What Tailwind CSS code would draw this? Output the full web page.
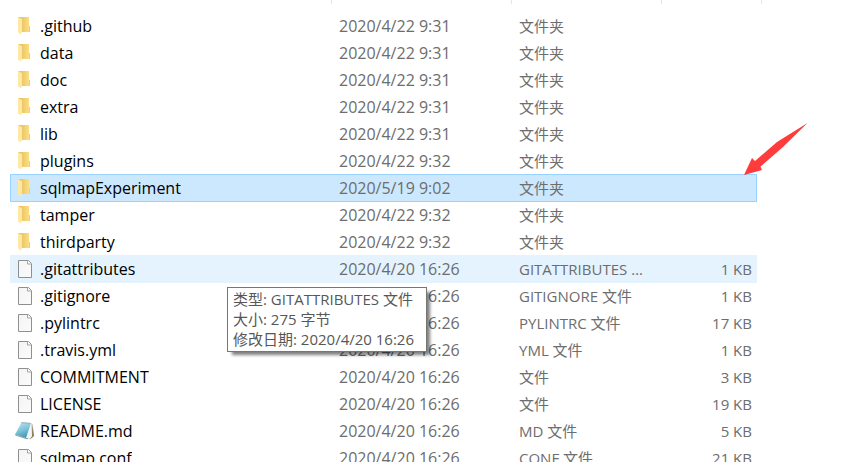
<!DOCTYPE html>
<html lang="zh-CN">
<head>
<meta charset="UTF-8">
<meta name="viewport" content="width=device-width, initial-scale=1.0">
<title>sqlmap</title>
<script src="https://cdn.jsdelivr.net/npm/@tailwindcss/browser@4"></script>
</head>
<body class="relative h-screen overflow-hidden bg-white font-['Open_Sans','Noto_Sans_CJK_SC',sans-serif] text-[15px] leading-5 text-[#6d6d6d]">

  <!-- icon sprites -->
  <svg class="absolute size-0" aria-hidden="true">
    <defs>
      <linearGradient id="folder-back" x1="0" x2="1">
        <stop offset="0.3" stop-color="#ebc565"/>
        <stop offset="0.9" stop-color="#fcdd82"/>
      </linearGradient>
      <linearGradient id="paper" x1="0" y1="0" x2="1" y2="1">
        <stop offset="0" stop-color="#f3f4f4"/>
        <stop offset="1" stop-color="#fbfbfb"/>
      </linearGradient>
      <linearGradient id="cover" x1="0.2" y1="0" x2="0.6" y2="1">
        <stop offset="0" stop-color="#b9e3ee"/>
        <stop offset="0.5" stop-color="#7fc4d9"/>
        <stop offset="1" stop-color="#3c93b2"/>
      </linearGradient>
    </defs>
    <symbol id="folder" viewBox="0 0 20 20">
      <path d="M3 1h11v9h1v6H4z" fill="url(#folder-back)"/>
      <path d="M14 10h1v6h-1z" fill="#f3cd6c"/>
      <path d="M3 1l3.600 2q.4.2.4.8v12l-1 2.600-3-1.900z" fill="#ffe8a3"/>
    </symbol>
    <symbol id="file" viewBox="0 0 20 20">
      <path d="M3.500 1.500h10l3 3v14h-13z" fill="url(#paper)" stroke="#8f8f8f"/>
      <path d="M12.500 1.500v3.500h4" fill="#fff" stroke="#a3a3a3"/>
    </symbol>
    <symbol id="notepad" viewBox="0 0 20 20">
      <path d="M16 2l1.800 1 1.400 12-4 3.500-3-1z" fill="#ded9c9"/>
      <path d="M17.300 3.200L19 15l-4 3.500 2-3.500z" fill="#8a7b60"/>
      <path d="M15.500 2l1.500 13-3 3-9-1.800z" fill="#f1f5f5"/>
      <path d="M6.500 1.500l9.500 .5-5 15L0 13.500z" fill="url(#cover)"/>
      <path d="M6.500 1l9.500 1-.4 1-9.500-.8z" fill="#9fb4ba"/>
      <path d="M0 13.500L11 17l3 .5-2 .8L.5 14.500z" fill="#81959b"/>
    </symbol>
  </svg>

  <main class="pl-[10px] pr-[90px]">
    <table class="w-full table-fixed border-separate border-spacing-0">
      <colgroup>
        <col>
        <col class="w-[180px]">
        <col class="w-[150px]">
        <col class="w-[96px]">
      </colgroup>
      <thead>
        <tr class="h-3 align-top">
          <th class="p-0" aria-label="名称"></th>
          <th class="p-0" aria-label="修改日期"><div class="h-1 border-l border-[#e5e5e5]"></div></th>
          <th class="p-0" aria-label="类型"><div class="h-1 border-l border-[#e5e5e5]"></div></th>
          <th class="p-0" aria-label="大小"><div class="-mr-[5px] h-1 border-x border-[#e5e5e5]"></div></th>
        </tr>
      </thead>
      <tbody id="file-list"></tbody>
    </table>
  </main>

  <div role="tooltip" class="absolute left-[227px] top-[287px] min-w-[200px] whitespace-nowrap border border-[#767676] bg-white px-[5px] pt-px pb-[2px] text-[#575757] shadow-[4px_4px_3px_-1px_rgba(0,0,0,0.5)]">
    <p>类型: GITATTRIBUTES 文件</p>
    <p>大小: 275 字节</p>
    <p>修改日期: 2020/4/20 16:26</p>
  </div>

  <!-- red arrow -->
  <svg class="absolute left-[743px] top-[122px] h-[54px] w-[65px]" viewBox="0 0 65 54" aria-hidden="true">
    <path d="M64.500 1L34 20 12 39 9 36 1 53l18-5-1.500-3.500L40 25z" fill="#ff3b3b"/>
  </svg>

  <script>
    const files = [
      { icon: 'folder', name: '.github', date: '2020/4/22 9:31', type: '文件夹', size: '' },
      { icon: 'folder', name: 'data', date: '2020/4/22 9:31', type: '文件夹', size: '' },
      { icon: 'folder', name: 'doc', date: '2020/4/22 9:31', type: '文件夹', size: '' },
      { icon: 'folder', name: 'extra', date: '2020/4/22 9:31', type: '文件夹', size: '' },
      { icon: 'folder', name: 'lib', date: '2020/4/22 9:31', type: '文件夹', size: '' },
      { icon: 'folder', name: 'plugins', date: '2020/4/22 9:32', type: '文件夹', size: '' },
      { icon: 'folder', name: 'sqlmapExperiment', date: '2020/5/19 9:02', type: '文件夹', size: '', state: 'selected' },
      { icon: 'folder', name: 'tamper', date: '2020/4/22 9:32', type: '文件夹', size: '' },
      { icon: 'folder', name: 'thirdparty', date: '2020/4/22 9:32', type: '文件夹', size: '' },
      { icon: 'file', name: '.gitattributes', date: '2020/4/20 16:26', type: 'GITATTRIBUTES 文件', size: '1 KB', state: 'hovered' },
      { icon: 'file', name: '.gitignore', date: '2020/4/20 16:26', type: 'GITIGNORE 文件', size: '1 KB' },
      { icon: 'file', name: '.pylintrc', date: '2020/4/20 16:26', type: 'PYLINTRC 文件', size: '17 KB' },
      { icon: 'file', name: '.travis.yml', date: '2020/4/20 16:26', type: 'YML 文件', size: '1 KB' },
      { icon: 'file', name: 'COMMITMENT', date: '2020/4/20 16:26', type: '文件', size: '3 KB' },
      { icon: 'file', name: 'LICENSE', date: '2020/4/20 16:26', type: '文件', size: '19 KB' },
      { icon: 'notepad', name: 'README.md', date: '2020/4/20 16:26', type: 'MD 文件', size: '5 KB' },
      { icon: 'file', name: 'sqlmap.conf', date: '2020/4/20 16:26', type: 'CONF 文件', size: '21 KB' }
    ];

    // rows overlap the next one by a pixel, so the last line is a shadow
    const rowStates = {
      selected: 'bg-[#cce8ff] shadow-[0_1px_0_#99d1ff,inset_0_1px_0_#99d1ff,inset_1px_0_0_#99d1ff,inset_-1px_0_0_#99d1ff]',
      hovered: 'bg-[#e5f3ff] shadow-[0_1px_0_#e5f3ff]'
    };

    document.getElementById('file-list').innerHTML = files.map(file => `
      <tr class="h-[27px] ${rowStates[file.state] || ''}">
        <td class="p-0 pl-[5px]">
          <div class="flex items-center gap-[5px] text-[16px] leading-5 text-black">
            <svg class="size-5 shrink-0"><use href="#${file.icon}"/></svg>
            <span class="truncate">${file.name}</span>
          </div>
        </td>
        <td class="truncate p-0 pl-2 text-[16px] leading-5">${file.date}</td>
        <td class="truncate p-0 pl-2 pr-3">${file.type}</td>
        <td class="p-0 pr-[5px] text-right">${file.size}</td>
      </tr>`).join('');
  </script>
</body>
</html>
